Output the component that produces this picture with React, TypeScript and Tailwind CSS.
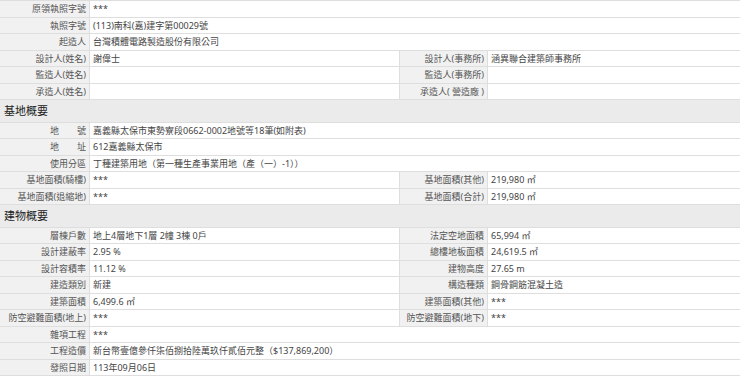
import React from "react";

type Item = {
    label: string;
    value?: string;
    rLabel?: string;
    rValue?: string;
};

const license: Item[] = [
    { label: "原領執照字號", value: "***" },
    { label: "執照字號", value: "(113)南科(嘉)建字第00029號" },
    { label: "起造人", value: "台灣積體電路製造股份有限公司" },
    { label: "設計人(姓名)", value: "謝偉士", rLabel: "設計人(事務所)", rValue: "涵異聯合建築師事務所" },
    { label: "監造人(姓名)", value: "", rLabel: "監造人(事務所)", rValue: "" },
    { label: "承造人(姓名)", value: "", rLabel: "承造人( 營造廠 )", rValue: "" },
];

const site: Item[] = [
    { label: "地　　號", value: "嘉義縣太保市東勢寮段0662-0002地號等18筆(如附表)" },
    { label: "地　　址", value: "612嘉義縣太保市" },
    { label: "使用分區", value: "丁種建築用地（第一種生產事業用地（產（一）-1））" },
    { label: "基地面積(騎樓)", value: "***", rLabel: "基地面積(其他)", rValue: "219,980 ㎡" },
    { label: "基地面積(退縮地)", value: "***", rLabel: "基地面積(合計)", rValue: "219,980 ㎡" },
];

const building: Item[] = [
    { label: "層棟戶數", value: "地上4層地下1層 2幢 3棟 0戶", rLabel: "法定空地面積", rValue: "65,994 ㎡" },
    { label: "設計建蔽率", value: "2.95 %", rLabel: "總樓地板面積", rValue: "24,619.5 ㎡" },
    { label: "設計容積率", value: "11.12 %", rLabel: "建物高度", rValue: "27.65 m" },
    { label: "建造類別", value: "新建", rLabel: "構造種類", rValue: "鋼骨鋼筋混凝土造" },
    { label: "建築面積", value: "6,499.6 ㎡", rLabel: "建築面積(其他)", rValue: "***" },
    { label: "防空避難面積(地上)", value: "***", rLabel: "防空避難面積(地下)", rValue: "***" },
    { label: "雜項工程", value: "***" },
    { label: "工程造價", value: "新台幣壹億參仟柒佰捌拾陸萬玖仟貳佰元整（$137,869,200）" },
    { label: "發照日期", value: "113年09月06日" },
];

function Row({ item }: { item: Item }) {
    const hasRight = item.rLabel !== undefined;
    return (
        <div className="flex h-[16.5px] border-b border-[#dedede] text-[9px] leading-[16px]">
            <div className="w-[90px] shrink-0 bg-[#f1f1f1] border-r border-[#dedede] text-right pr-[3px] text-[#555] whitespace-nowrap">
                {item.label}
            </div>
            <div className={(hasRight ? "w-[309px] shrink-0" : "flex-1") + " pl-[3px] text-[#444] whitespace-nowrap"}>
                {item.value}
            </div>
            {hasRight && (
                <>
                    <div className="w-[89px] shrink-0 bg-[#f1f1f1] border-l border-r border-[#dedede] text-right pr-[3px] text-[#555] whitespace-nowrap">
                        {item.rLabel}
                    </div>
                    <div className="flex-1 pl-[3px] text-[#444] whitespace-nowrap">{item.rValue}</div>
                </>
            )}
        </div>
    );
}

function Header({ title }: { title: string }) {
    return (
        <div className="h-[22.5px] bg-[#ebebeb] border-b border-[#dedede] pl-[4px] flex items-center text-[11px] text-[#222]">
            {title}
        </div>
    );
}

export default function App() {
    return (
        <div
            className="w-[740px] h-[377px] overflow-hidden bg-white border-t border-[#dedede]"
            style={{ fontFamily: '"Noto Sans", "Noto Sans CJK TC", sans-serif' }}
        >
            {license.map((it) => (
                <Row key={it.label} item={it} />
            ))}
            <Header title="基地概要" />
            {site.map((it) => (
                <Row key={it.label} item={it} />
            ))}
            <Header title="建物概要" />
            {building.map((it) => (
                <Row key={it.label} item={it} />
            ))}
        </div>
    );
}
